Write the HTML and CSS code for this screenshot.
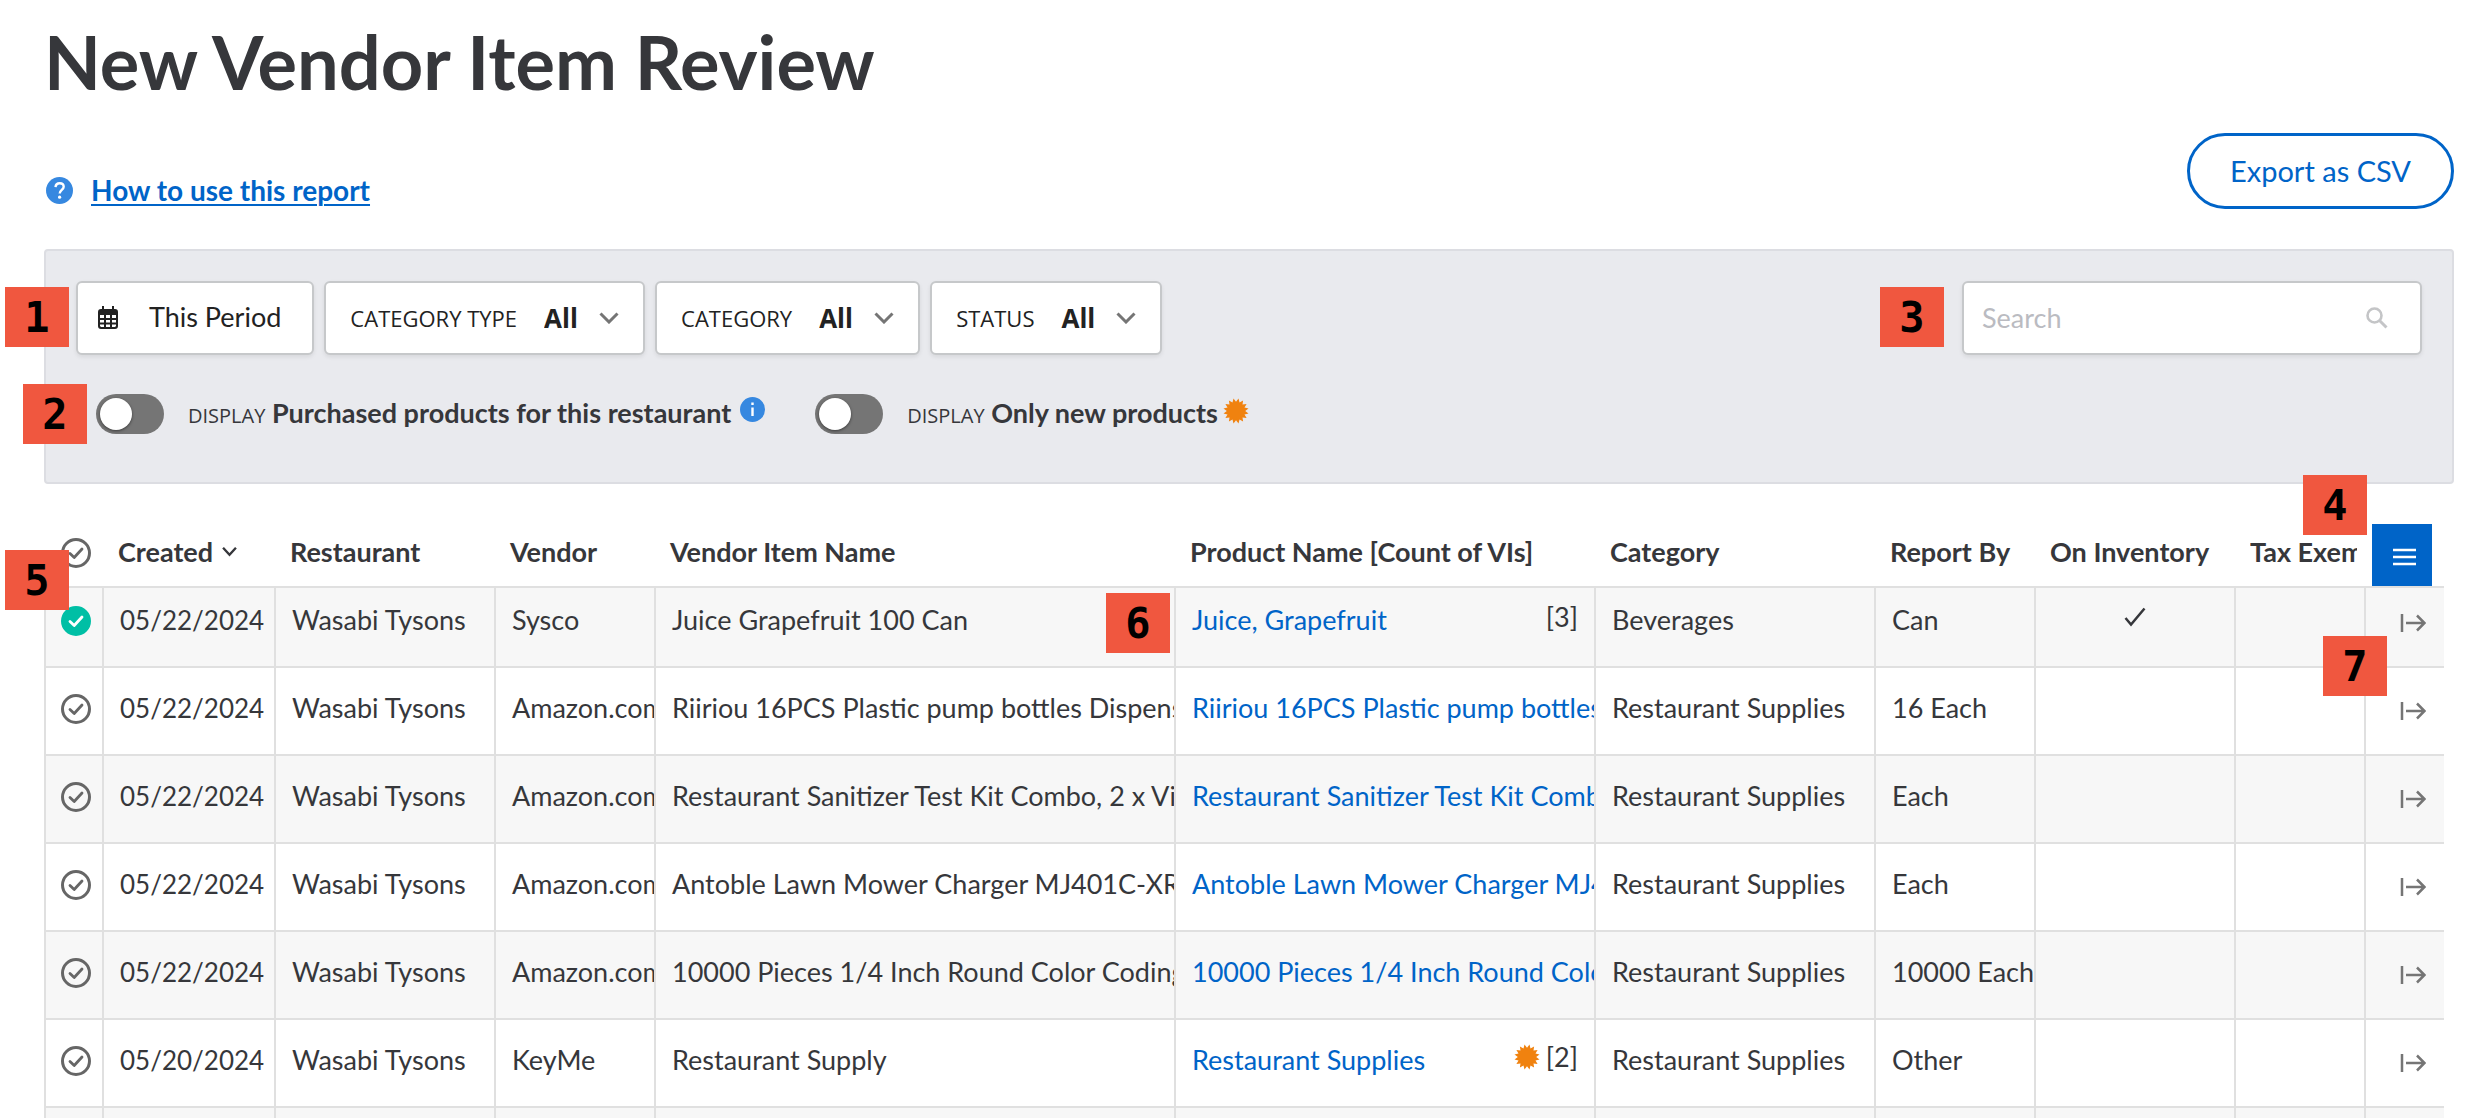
FILE: index.html
```html
<!DOCTYPE html>
<html lang="en">
<head>
<meta charset="utf-8">
<title>New Vendor Item Review</title>
<link rel="stylesheet" href="styles.css">
</head>
<body>
<svg class="sprite" aria-hidden="true">
  <symbol id="check" viewBox="0 0 30 30"><path d="M9 15.500l4.200 4 7.800-8.500" fill="none" stroke="currentColor" stroke-width="2.800" stroke-linecap="round" stroke-linejoin="round"/></symbol>
  <symbol id="chevron" viewBox="0 0 20 12"><path d="M1.500 1.500L10 10l8.500-8.500" fill="none" stroke="currentColor" stroke-width="3"/></symbol>
  <symbol id="arrow" viewBox="0 0 26 18"><path d="M2 0v18M6 9h18M17 1.500L24.500 9 17 16.500" fill="none" stroke="currentColor" stroke-width="2.500"/></symbol>
  <symbol id="burst" viewBox="-13 -13 26 26"><path fill="currentColor" d="M9.200 0L12.500 2.500 8.500 3.500 10.600 7.100 6.500 6.500 7.100 10.600 3.500 8.500 2.500 12.500 0 9.200-2.500 12.500-3.500 8.500-7.100 10.600-6.500 6.500-10.600 7.100-8.500 3.500-12.500 2.500-9.200 0-12.500-2.500-8.500-3.500-10.600-7.100-6.500-6.500-7.100-10.600-3.500-8.500-2.500-12.500 0-9.200 2.500-12.500 3.500-8.500 7.100-10.600 6.500-6.500 10.600-7.100 8.500-3.500 12.500-2.500Z"/></symbol>
</svg>
<main class="page">
  <h1 class="title">New Vendor Item Review</h1>
  <div class="head">
    <div class="help">
      <svg class="help-icon" viewBox="0 0 27 27" aria-hidden="true"><circle cx="13.500" cy="13.500" r="13.500" fill="#3688e0"/><path d="M9.500 10.200c.2-2.600 1.900-4 4.200-4 2.400 0 4 1.500 4 3.500 0 3.100-4 3.500-4 6.900" fill="none" stroke="#fff" stroke-width="2.400"/><circle cx="13.600" cy="20.200" r="1.600" fill="#fff"/></svg>
      <a class="help-link" href="#">How to use this report</a>
    </div>
    <button class="export" type="button">Export as CSV</button>
  </div>

  <section class="panel">
    <div class="filters">
      <button class="box date" type="button">
        <svg class="calendar" viewBox="0 0 20 23" aria-hidden="true"><path fill="#222" fill-rule="evenodd" d="M4 0h2v3h8V0h2v3h1a3 3 0 0 1 3 3v14a3 3 0 0 1-3 3H3a3 3 0 0 1-3-3V6a3 3 0 0 1 3-3h1zM2 9v3h4V9zm6 0v3h4V9zm6 0v3h4V9zM2 14v2.500h4V14zm6 0v2.500h4V14zm6 0v2.500h4V14zM2 18.500V20l1 1h3v-2.500zm6 0V21h4v-2.500zm6 0V21h3l1-1v-1.500z"/></svg>
        This Period
      </button>
      <label class="box pick">Category Type
        <select class="pick-select"><option>All</option></select>
        <svg class="chevron"><use href="#chevron"/></svg>
      </label>
      <label class="box pick">Category
        <select class="pick-select"><option>All</option></select>
        <svg class="chevron"><use href="#chevron"/></svg>
      </label>
      <label class="box pick">Status
        <select class="pick-select"><option>All</option></select>
        <svg class="chevron"><use href="#chevron"/></svg>
      </label>
      <div class="box search">
        <input class="search-input" type="search" placeholder="Search" aria-label="Search">
        <svg class="search-icon" viewBox="0 0 22 22" aria-hidden="true"><circle cx="8.500" cy="8.500" r="7" fill="none" stroke="#c4c5c7" stroke-width="2.600"/><path d="M13.500 13.500l7 7" stroke="#c4c5c7" stroke-width="3"/></svg>
      </div>
    </div>
    <div class="toggles">
      <label class="toggle">
        <input class="switch" type="checkbox">
        <span class="toggle-text"><span class="display">DISPLAY</span> Purchased products for this restaurant</span>
        <svg class="info" viewBox="0 0 25 25" aria-hidden="true"><circle cx="12.500" cy="12.500" r="12.500" fill="#3688e0"/><path d="M12.500 10.500v8.500M12.500 5.500v2.600" stroke="#fff" stroke-width="2.400"/></svg>
      </label>
      <label class="toggle">
        <input class="switch" type="checkbox">
        <span class="toggle-text"><span class="display">DISPLAY</span> Only new products</span>
        <svg class="burst"><use href="#burst"/></svg>
      </label>
    </div>
  </section>

  <div class="table-wrap">
    <table class="grid">
      <colgroup>
        <col class="c-check"><col class="c-date"><col class="c-rest"><col class="c-vendor"><col class="c-item"><col class="c-product"><col class="c-cat"><col class="c-report"><col class="c-inv"><col class="c-tax"><col class="c-open">
      </colgroup>
      <thead>
        <tr>
          <th class="tick-cell"><label class="tick"><input type="checkbox" aria-label="Select all"><svg><use href="#check"/></svg></label></th>
          <th>Created <svg class="sort" viewBox="0 0 14 10" aria-hidden="true"><path d="M1 1.500l6 6.500 6-6.500" fill="none" stroke="#36373b" stroke-width="2.200"/></svg></th>
          <th>Restaurant</th><th>Vendor</th><th>Vendor Item Name</th><th>Product Name [Count of VIs]</th><th>Category</th><th>Report By</th><th>On Inventory</th><th class="tax"><div class="clip">Tax Exempt</div></th>
          <th class="menu-cell"><button class="menu" type="button" aria-label="Columns"><svg viewBox="0 0 23 18"><path d="M0 2h23M0 9h23M0 16h23" stroke="#fff" stroke-width="2.500"/></svg></button></th>
        </tr>
      </thead>
      <tbody>
        <tr class="first">
          <td class="tick-cell"><label class="tick"><input type="checkbox" checked aria-label="Reviewed"><svg><use href="#check"/></svg></label></td>
          <td class="created">05/22/2024</td><td>Wasabi Tysons</td><td>Sysco</td><td>Juice Grapefruit 100 Can</td>
          <td><div class="product"><a href="#">Juice, Grapefruit</a><span class="count">[3]</span></div></td>
          <td>Beverages</td><td>Can</td>
          <td class="inv"><svg class="inv-check" viewBox="0 0 22 20" role="img" aria-label="Yes"><path d="M1.500 11l5.500 6.500L20.500 1.500" fill="none" stroke="#36373b" stroke-width="2.500"/></svg></td>
          <td></td><td class="open"><svg><use href="#arrow"/></svg></td>
        </tr>
        <tr>
          <td class="tick-cell"><label class="tick"><input type="checkbox" aria-label="Reviewed"><svg><use href="#check"/></svg></label></td>
          <td class="created">05/22/2024</td><td>Wasabi Tysons</td><td>Amazon.com</td><td>Riiriou 16PCS Plastic pump bottles Dispenser</td>
          <td><div class="product"><a href="#">Riiriou 16PCS Plastic pump bottles Dispenser</a></div></td>
          <td>Restaurant Supplies</td><td>16 Each</td><td></td><td></td><td class="open"><svg><use href="#arrow"/></svg></td>
        </tr>
        <tr>
          <td class="tick-cell"><label class="tick"><input type="checkbox" aria-label="Reviewed"><svg><use href="#check"/></svg></label></td>
          <td class="created">05/22/2024</td><td>Wasabi Tysons</td><td>Amazon.com</td><td>Restaurant Sanitizer Test Kit Combo, 2 x Vials</td>
          <td><div class="product"><a href="#">Restaurant Sanitizer Test Kit Combo, 2 x Vials</a></div></td>
          <td>Restaurant Supplies</td><td>Each</td><td></td><td></td><td class="open"><svg><use href="#arrow"/></svg></td>
        </tr>
        <tr>
          <td class="tick-cell"><label class="tick"><input type="checkbox" aria-label="Reviewed"><svg><use href="#check"/></svg></label></td>
          <td class="created">05/22/2024</td><td>Wasabi Tysons</td><td>Amazon.com</td><td>Antoble Lawn Mower Charger MJ401C-XR</td>
          <td><div class="product"><a href="#">Antoble Lawn Mower Charger MJ401C-XR</a></div></td>
          <td>Restaurant Supplies</td><td>Each</td><td></td><td></td><td class="open"><svg><use href="#arrow"/></svg></td>
        </tr>
        <tr>
          <td class="tick-cell"><label class="tick"><input type="checkbox" aria-label="Reviewed"><svg><use href="#check"/></svg></label></td>
          <td class="created">05/22/2024</td><td>Wasabi Tysons</td><td>Amazon.com</td><td>10000 Pieces 1/4 Inch Round Color Coding</td>
          <td><div class="product"><a href="#">10000 Pieces 1/4 Inch Round Color Coding</a></div></td>
          <td>Restaurant Supplies</td><td>10000 Each</td><td></td><td></td><td class="open"><svg><use href="#arrow"/></svg></td>
        </tr>
        <tr>
          <td class="tick-cell"><label class="tick"><input type="checkbox" aria-label="Reviewed"><svg><use href="#check"/></svg></label></td>
          <td class="created">05/20/2024</td><td>Wasabi Tysons</td><td>KeyMe</td><td>Restaurant Supply</td>
          <td><div class="product"><a href="#">Restaurant Supplies</a><span class="count"><svg class="burst"><use href="#burst"/></svg>[2]</span></div></td>
          <td>Restaurant Supplies</td><td>Other</td><td></td><td></td><td class="open"><svg><use href="#arrow"/></svg></td>
        </tr>
        <tr><td class="tick-cell"></td><td></td><td></td><td></td><td></td><td></td><td></td><td></td><td></td><td></td><td class="open"></td></tr>
      </tbody>
    </table>
  </div>

  <span class="marker m1">1</span>
  <span class="marker m2">2</span>
  <span class="marker m3">3</span>
  <span class="marker m4">4</span>
  <span class="marker m5">5</span>
  <span class="marker m6">6</span>
  <span class="marker m7">7</span>
</main>
</body>
</html>
```
FILE: styles.css
```css
* { box-sizing: border-box; }

body {
  margin: 0;
  background: #fff;
  color: #36373b;
  font: 27px/32px Lato, "Liberation Sans", sans-serif;
}

button, input, select { font: inherit; color: inherit; margin: 0; }
svg { display: block; flex: none; }
a { color: #0064c8; text-decoration: none; }
.sprite { position: absolute; width: 0; height: 0; }

.page {
  position: relative;
  display: flex;
  flex-direction: column;
  height: 100vh;
  padding: 16px 38px 0 44px;
  overflow: hidden;
}

.title { margin: 0; font-size: 74px; line-height: 92px; font-weight: 700; }

.head {
  display: flex;
  justify-content: space-between;
  align-items: flex-end;
  margin: 25px 0 40px;
}
.help { display: flex; align-items: center; gap: 18px; height: 38px; padding-left: 2px; }
.help-icon { width: 27px; height: 27px; }
.help-link {
  font-size: 28px;
  font-weight: 700;
  text-decoration: underline;
  text-decoration-thickness: 2px;
  text-underline-offset: 3px;
}
.export {
  height: 76px;
  padding: 0 40px;
  border: 3px solid #0064c8;
  border-radius: 38px;
  background: #fff;
  color: #0064c8;
  font-size: 29px;
}

.panel {
  padding: 30px 30px 48px;
  border: 2px solid #dcdde2;
  border-radius: 4px;
  background: #e9eaee;
}
.filters { display: flex; gap: 10px; }
.box {
  display: flex;
  align-items: center;
  height: 74px;
  border: 2px solid #c6c8ca;
  border-radius: 6px;
  background: #fff;
  color: #222;
  box-shadow: 0 2px 4px rgba(0, 0, 0, .08);
}
.date { gap: 31px; padding: 0 31px 2px 20px; }
.calendar { width: 20px; height: 23px; }
.pick {
  padding: 0 24px;
  font: 22px/32px "Open Sans", "Noto Sans", sans-serif;
  text-transform: uppercase;
}
.pick-select {
  width: 36px;
  margin: 0 19px 0 27px;
  padding: 0;
  border: 0;
  background: none;
  appearance: none;
  font-size: 26px;
  font-weight: 700;
}
.chevron { width: 20px; height: 12px; color: #757575; }
.search { width: 460px; margin-left: auto; padding: 0 32px 0 18px; }
.search-input {
  flex: 1;
  min-width: 0;
  padding: 0;
  border: 0;
  outline: 0;
  background: none;
  appearance: none;
}
.search-input::placeholder { color: #babbc1; }
.search-icon { width: 22px; height: 22px; }

.toggles { display: flex; gap: 50px; margin: 39px 0 0 20px; }
.toggle { display: flex; align-items: center; height: 40px; }
.switch {
  width: 68px;
  height: 40px;
  padding: 4px;
  border-radius: 20px;
  background: #757575;
  appearance: none;
}
.switch::before {
  content: "";
  display: block;
  width: 32px;
  height: 32px;
  border-radius: 50%;
  background: #fff;
  box-shadow: 0 1px 3px rgba(0, 0, 0, .5);
}
.switch:checked::before { margin-left: auto; }
.toggle-text { margin: 0 0 2px 24px; font-weight: 700; }
.display { font: 20px "Open Sans", "Noto Sans", sans-serif; }
.info { width: 25px; height: 25px; margin: 0 0 10px 9px; }
.burst { width: 26px; height: 26px; color: #f0820f; }
.toggle .burst { margin: 0 0 6px 5px; }

.table-wrap { flex: 1; min-height: 0; margin: 40px 10px 0 0; overflow: hidden; }
.grid { width: 100%; table-layout: fixed; border-collapse: separate; border-spacing: 0; }
.c-check { width: 60px; }
.c-date { width: 172px; }
.c-rest { width: 220px; }
.c-vendor { width: 160px; }
.c-product { width: 420px; }
.c-cat { width: 280px; }
.c-report { width: 160px; }
.c-inv { width: 200px; }
.c-tax { width: 130px; }
.c-open { width: 78px; }

th {
  height: 64px;
  padding: 0 0 18px 14px;
  border-bottom: 2px solid #e0e0e0;
  overflow: hidden;
  text-align: left;
  vertical-align: bottom;
  white-space: nowrap;
  font-weight: 700;
}
.sort { display: inline-block; width: 15px; height: 11px; margin: 0 0 5px 2px; }
th.tax { padding-right: 9px; }
.clip { overflow: hidden; }
th.menu-cell { padding: 0 0 0 6px; }
.menu {
  display: grid;
  place-items: center;
  width: 60px;
  height: 64px;
  margin-bottom: -2px;
  padding: 2px 0 0 4px;
  border: 0;
  background: #0064c8;
}
.menu svg { width: 23px; height: 18px; }

td {
  height: 88px;
  padding: 0 0 30px 16px;
  border-right: 2px solid #e0e0e0;
  border-bottom: 2px solid #e0e0e0;
  overflow: hidden;
  vertical-align: bottom;
  white-space: nowrap;
}
.first td { height: 80px; }
tbody tr:nth-child(odd) { background: #f7f7f7; }
td.tick-cell { padding: 0 0 30px 15px; border-left: 2px solid #e0e0e0; }
th.tick-cell { padding-left: 17px; }
td.created { font-size: 26px; }
td.inv { padding: 0 0 39px; }
td.open { padding: 0 0 34px 34px; border-right: 0; color: #757575; }
.open svg { width: 26px; height: 18px; }
.inv-check { width: 22px; height: 20px; margin: 0 auto; }

.tick { display: grid; width: 30px; height: 30px; color: #666; }
.tick input, .tick svg { grid-area: 1 / 1; width: 30px; height: 30px; }
.tick svg { pointer-events: none; }
.tick input { border: 3px solid #666; border-radius: 50%; appearance: none; }
.tick input:checked { border-color: #00bfa5; background: #00bfa5; }
.tick input:checked + svg { color: #fff; }

.product { display: flex; align-items: flex-end; height: 32px; }
.product a { flex: 1; min-width: 0; overflow: hidden; }
.count { display: flex; align-items: center; gap: 6px; padding: 0 16px 3px 0; }

.marker {
  position: absolute;
  width: 64px;
  height: 60px;
  background: #f0573f;
  color: #000;
  font: 700 42px/62px "DejaVu Sans Mono", monospace;
  text-align: center;
}
.m1 { left: 5px; top: 287px; }
.m2 { left: 23px; top: 384px; }
.m3 { right: 548px; top: 287px; }
.m4 { right: 125px; top: 475px; }
.m5 { left: 5px; top: 550px; }
.m6 { right: 1322px; top: 593px; }
.m7 { right: 105px; top: 636px; }
```
